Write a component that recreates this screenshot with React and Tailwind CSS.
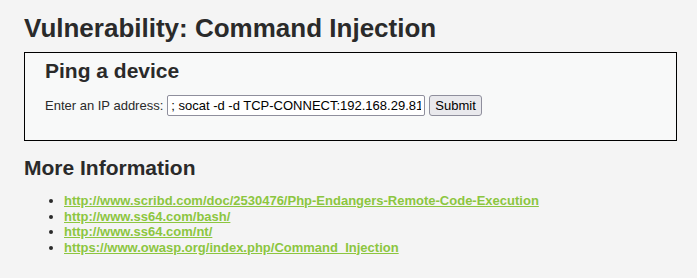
export default function App() {
  const links = [
    "http://www.scribd.com/doc/2530476/Php-Endangers-Remote-Code-Execution",
    "http://www.ss64.com/bash/",
    "http://www.ss64.com/nt/",
    "https://www.owasp.org/index.php/Command_Injection",
  ]

  return (
    <div className="min-h-[278px] bg-[#f4f4f4] px-[24px] pt-[13px] pb-4 text-[#2a2a2a] font-['Liberation_Sans',Arial,sans-serif]">
      <h1 className="text-[26px] font-bold leading-[30px]">Vulnerability: Command Injection</h1>

      {/* Ping form */}
      <div className="mt-[9px] h-[89px] w-[653px] border border-black bg-[#f8f9f9] px-[20px] pt-[5px]">
        <h2 className="text-[21px] font-bold leading-[26px]">Ping a device</h2>
        <form className="mt-[11px] flex items-center text-[13px]" onSubmit={(e) => e.preventDefault()}>
          <label className="mr-[4px]">Enter an IP address:</label>
          <input
            type="text"
            readOnly
            value="; socat -d -d TCP-CONNECT:192.168.29.81"
            className="h-[21px] w-[258px] rounded-[2px] border border-[#8f8f9d] bg-white px-[3px] text-[13px] text-black outline-none"
          />
          <button
            type="button"
            className="ml-[4px] h-[21px] rounded-[3px] border border-[#8f8f9d] bg-[#e9e9ed] px-[5px] text-[13px] text-black"
          >
            Submit
          </button>
        </form>
      </div>

      <h2 className="mt-[14px] text-[21px] font-bold leading-[26px]">More Information</h2>
      <ul className="mt-[12px] list-disc pl-[40px] text-[13px] font-bold leading-[15.5px]">
        {links.map((href) => (
          <li key={href}>
            <a href={href} className="text-[#8cc63f] underline">
              {href}
            </a>
          </li>
        ))}
      </ul>
    </div>
  )
}
